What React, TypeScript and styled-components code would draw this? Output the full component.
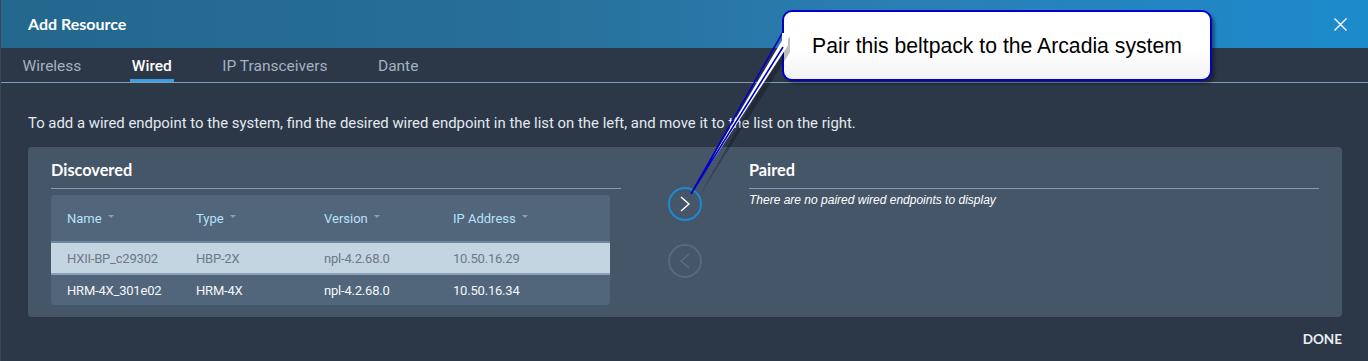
import React from "react";
import styled, { createGlobalStyle, css } from "styled-components";

const Global = createGlobalStyle`
  html, body { margin: 0; padding: 0; background: #2c3848; }
  body { font-family: Roboto, "Liberation Sans", sans-serif; }
  * { box-sizing: border-box; }
`;

const Dialog = styled.div`
  position: relative;
  width: 1368px;
  height: 361px;
  background: #2c3848;
  border-left: 1px solid #3a4657;
  overflow: hidden;
`;

const Header = styled.div`
  height: 48px;
  display: flex;
  align-items: center;
  justify-content: space-between;
  padding: 0 21px 0 27px;
  background: linear-gradient(90deg, #23678d 0%, #27709b 40%, #2a7fb4 66%, #1c8bcc 100%);
`;

const Title = styled.h1`
  margin: 0;
  font-family: Lato, "Noto Sans", sans-serif;
  font-weight: 700;
  font-size: 16px;
  line-height: 20px;
  color: #ffffff;
`;

const CloseButton = styled.button`
  width: 13px;
  height: 13px;
  padding: 0;
  border: 0;
  background: none;
  display: flex;
  cursor: pointer;
`;

const Tabs = styled.nav`
  height: 35px;
  display: flex;
  gap: 46.5px;
  padding-left: 19.5px;
  border-bottom: 1px solid #7e9cb8;
`;

const Tab = styled.div<{ $active?: boolean }>`
  height: 34px;
  padding: 9px 2px 0;
  font-size: 15.5px;
  line-height: 18px;
  color: #a3b1c2;
  border-bottom: 3px solid transparent;
  ${(p) =>
    p.$active &&
    css`
      color: #ffffff;
      font-weight: 500;
      border-bottom-color: #3a9fe4;
    `}
`;

const Body = styled.div`
  padding: 0 26px 0 27px;
`;

const Intro = styled.p`
  margin: 30px 0 14px;
  font-size: 14.9px;
  line-height: 20px;
  color: #e3e8ee;
`;

const Panel = styled.section`
  height: 170px;
  display: grid;
  grid-template-columns: 570px 128px 570px;
  padding: 0 23px;
  background: #465669;
  border-radius: 4px;
`;

const Column = styled.div`
  display: flex;
  flex-direction: column;
`;

const SectionTitle = styled.h2`
  margin: 0;
  padding: 13px 0 8px;
  font-family: Lato, "Noto Sans", sans-serif;
  font-weight: 700;
  font-size: 16.3px;
  line-height: 20px;
  color: #ffffff;
  border-bottom: 1px solid #7e9cb8;
`;

const Table = styled.div`
  margin: 6px 11px 0 0;
  background: #51657b;
  border-radius: 4px;
  overflow: hidden;
`;

const Row = styled.div<{ $kind: "head" | "selected" | "normal" }>`
  display: grid;
  grid-template-columns: 129px 128px 129px 1fr;
  align-items: center;
  padding-left: 16px;
  font-size: 13px;
  letter-spacing: -0.2px;
  ${(p) =>
    p.$kind === "head"
      ? css`
          height: 46px;
          color: #b7e2fb;
          letter-spacing: 0;
        `
      : p.$kind === "selected"
      ? css`
          height: 32px;
          background: #c3d5e1;
          color: #6d7888;
          border-top: 2px solid #6f879e;
        `
      : css`
          height: 32px;
          color: #f4f7fa;
          border-top: 2px solid #8aa0b4;
        `}
`;

const Cell = styled.div`
  display: flex;
  align-items: center;
  white-space: nowrap;
`;

const Caret = styled.span`
  display: inline-block;
  width: 0;
  height: 0;
  margin: -3px 0 0 6px;
  border-left: 3px solid transparent;
  border-right: 3px solid transparent;
  border-top: 3px solid #8d9cb0;
`;

const Transfer = styled.div`
  display: flex;
  flex-direction: column;
  align-items: center;
  gap: 23px;
  padding-top: 40px;
`;

const RoundButton = styled.button<{ $disabled?: boolean }>`
  width: 34px;
  height: 34px;
  padding: 0;
  border-radius: 50%;
  background: transparent;
  border: 2px solid ${(p) => (p.$disabled ? "#56697e" : "#1b8ad2")};
  display: flex;
  align-items: center;
  justify-content: center;
  cursor: pointer;
`;

const Empty = styled.p`
  margin: 1px 0 0;
  font-family: "Liberation Sans", Arial, sans-serif;
  font-style: italic;
  font-size: 12px;
  line-height: 20px;
  color: #ffffff;
`;

const Footer = styled.div`
  display: flex;
  justify-content: flex-end;
  padding-top: 14px;
`;

const DoneButton = styled.button`
  padding: 0;
  border: 0;
  background: none;
  font-family: Lato, "Noto Sans", sans-serif;
  font-weight: 700;
  font-size: 13.5px;
  line-height: 16px;
  color: #e9edf1;
  cursor: pointer;
`;

const Callout = styled.div`
  position: absolute;
  left: 781px;
  top: 10px;
  width: 430px;
  height: 71px;
  display: flex;
  align-items: center;
  justify-content: center;
  border: 2px solid #0000c8;
  border-radius: 10px;
  background: linear-gradient(180deg, #ffffff 0%, #ffffff 55%, #f3f3f3 100%);
  box-shadow: 3px 3px 3px rgba(0, 0, 0, 0.35);
  font-family: "Liberation Sans", Arial, sans-serif;
  font-size: 21.2px;
  color: #000000;
`;

const Pointer = styled.svg`
  position: absolute;
  left: 680px;
  top: 20px;
  overflow: visible;
`;

const tabs = ["Wireless", "Wired", "IP Transceivers", "Dante"];

const discovered = [
  { name: "HXII-BP_c29302", type: "HBP-2X", version: "npl-4.2.68.0", ip: "10.50.16.29", selected: true },
  { name: "HRM-4X_301e02", type: "HRM-4X", version: "npl-4.2.68.0", ip: "10.50.16.34", selected: false },
];

export default function App() {
  return (
    <>
      <Global />
      <Dialog>
        <Header>
          <Title>Add Resource</Title>
          <CloseButton aria-label="Close">
            <svg width="13" height="13" viewBox="0 0 13 13">
              <path d="M0.5 0.5 L12.5 12.5 M12.5 0.5 L0.5 12.5" stroke="#ffffff" strokeWidth="1.4" />
            </svg>
          </CloseButton>
        </Header>
        <Tabs>
          {tabs.map((t) => (
            <Tab key={t} $active={t === "Wired"}>
              {t}
            </Tab>
          ))}
        </Tabs>
        <Body>
          <Intro>
            To add a wired endpoint to the system, find the desired wired endpoint in the list on the left, and move it to the list on the right.
          </Intro>
          <Panel>
            <Column>
              <SectionTitle>Discovered</SectionTitle>
              <Table>
                <Row $kind="head">
                  {["Name", "Type", "Version", "IP Address"].map((h) => (
                    <Cell key={h}>
                      {h}
                      <Caret />
                    </Cell>
                  ))}
                </Row>
                {discovered.map((d) => (
                  <Row key={d.name} $kind={d.selected ? "selected" : "normal"}>
                    <Cell>{d.name}</Cell>
                    <Cell>{d.type}</Cell>
                    <Cell>{d.version}</Cell>
                    <Cell>{d.ip}</Cell>
                  </Row>
                ))}
              </Table>
            </Column>
            <Transfer>
              <RoundButton aria-label="Pair">
                <svg width="30" height="30" viewBox="0 0 30 30">
                  <polyline points="11,8 19,15 11,22" fill="none" stroke="#ffffff" strokeWidth="1.4" />
                </svg>
              </RoundButton>
              <RoundButton $disabled aria-label="Unpair">
                <svg width="30" height="30" viewBox="0 0 30 30">
                  <polyline points="19,8 11,15 19,22" fill="none" stroke="#5a6e84" strokeWidth="1.4" />
                </svg>
              </RoundButton>
            </Transfer>
            <Column>
              <SectionTitle>Paired</SectionTitle>
              <Empty>There are no paired wired endpoints to display</Empty>
            </Column>
          </Panel>
          <Footer>
            <DoneButton>DONE</DoneButton>
          </Footer>
        </Body>
        <Callout>Pair this beltpack to the Arcadia system</Callout>
        <Pointer width="110" height="180" viewBox="0 0 110 180">
          <polygon points="106,14 14,176 106,30" fill="rgba(0,0,0,0.25)" transform="translate(3,2)" />
          <polygon points="106,12 10,174 106,27" fill="#ffffff" />
          <polyline points="102,12 10,174 102,27" fill="none" stroke="#0000c8" strokeWidth="1.6" strokeLinejoin="miter" />
          <rect x="101" y="13" width="6" height="13" fill="#ffffff" />
        </Pointer>
      </Dialog>
    </>
  );
}
